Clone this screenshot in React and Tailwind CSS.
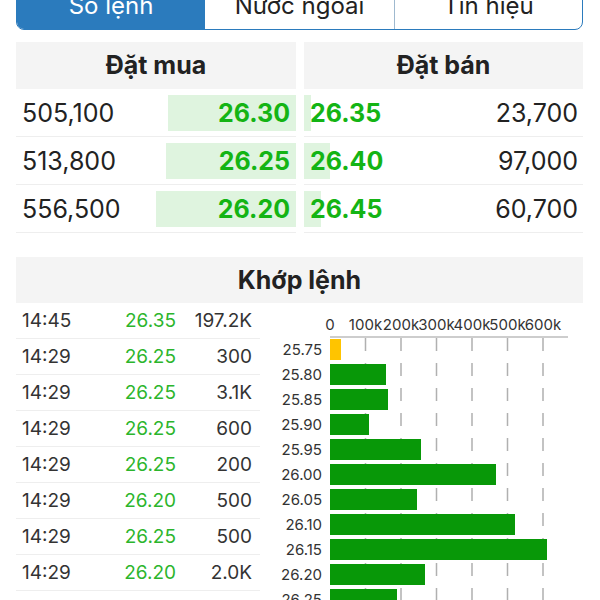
import React from "react";

const bids = [
  { q: "505,100", p: "26.30", w: 128 },
  { q: "513,800", p: "26.25", w: 130 },
  { q: "556,500", p: "26.20", w: 140 },
];
const asks = [
  { q: "23,700", p: "26.35", w: 7 },
  { q: "97,000", p: "26.40", w: 26 },
  { q: "60,700", p: "26.45", w: 17 },
];
const trades = [
  ["14:45", "26.35", "197.2K"],
  ["14:29", "26.25", "300"],
  ["14:29", "26.25", "3.1K"],
  ["14:29", "26.25", "600"],
  ["14:29", "26.25", "200"],
  ["14:29", "26.20", "500"],
  ["14:29", "26.25", "500"],
  ["14:29", "26.20", "2.0K"],
  ["14:29", "26.25", "1.0K"],
];
const bars = [
  ["25.75", 11, "#ffc400"],
  ["25.80", 56, "#089808"],
  ["25.85", 58, "#089808"],
  ["25.90", 39, "#089808"],
  ["25.95", 91, "#089808"],
  ["26.00", 166, "#089808"],
  ["26.05", 87, "#089808"],
  ["26.10", 185, "#089808"],
  ["26.15", 217, "#089808"],
  ["26.20", 95, "#089808"],
  ["26.25", 67, "#089808"],
  ["26.30", 40, "#089808"],
];
const ticks = ["0", "100k", "200k", "300k", "400k", "500k", "600k"];

function Chart() {
  return (
    <svg width="321" height="297" viewBox="262 303 321 297" className="block">
      {ticks.map((t, i) => (
        <text key={t} x={330 + i * 35.5} y={330} fontSize="15" fill="#333" textAnchor="middle" fontFamily="Inter, sans-serif">
          {t}
        </text>
      ))}
      {ticks.slice(1).map((t, i) => (
        <line key={t} x1={365.5 + i * 35.5} x2={365.5 + i * 35.5} y1={338} y2={600} stroke="#b0b0b0" strokeWidth="1.5" strokeDasharray="13 12" />
      ))}
      <line x1="330" x2="568" y1="337" y2="337" stroke="#bdbdbd" strokeWidth="1.5" />
      {bars.map(([label, w, c], i) => (
        <g key={label}>
          <text x="322" y={339 + i * 25 + 16} fontSize="15" fill="#333" textAnchor="end" fontFamily="Inter, sans-serif">
            {label}
          </text>
          <rect x="330" y={339 + i * 25} width={w} height="21" fill={c} />
        </g>
      ))}
    </svg>
  );
}

export default function App() {
  return (
    <div className="w-[600px] h-[600px] overflow-hidden bg-white font-['Inter',sans-serif] text-[#222]">
      <div className="ml-[16px] mr-[17px] mt-[-18px] h-[48px] flex border border-[#2b7bbd] rounded-b-[8px] overflow-hidden text-[24px]">
        <div className="w-[188px] bg-[#2b7bbd] text-white flex items-center justify-center">Sổ lệnh</div>
        <div className="w-[190px] border-r border-[#9fb9cf] flex items-center justify-center">Nước ngoài</div>
        <div className="flex-1 flex items-center justify-center">Tín hiệu</div>
      </div>

      <div className="mt-[12px] ml-[16px] mr-[17px] flex gap-[8px]">
        <div className="w-[280px]">
          <div className="h-[47px] bg-[#f4f4f4] flex items-center justify-center font-bold text-[25px]">Đặt mua</div>
          {bids.map((r) => (
            <div key={r.p} className="relative h-[48px] border-b border-[#eeeeee] flex items-center justify-between pl-[6px] pr-[6px] pt-[2px] text-[25px]">
              <div className="absolute right-0 top-[6px] bottom-[5px] bg-[#dff4df]" style={{ width: r.w }} />
              <span className="relative">{r.q}</span>
              <span className="relative font-bold text-[#14b414]">{r.p}</span>
            </div>
          ))}
        </div>
        <div className="flex-1">
          <div className="h-[47px] bg-[#f4f4f4] flex items-center justify-center font-bold text-[25px]">Đặt bán</div>
          {asks.map((r) => (
            <div key={r.p} className="relative h-[48px] border-b border-[#eeeeee] flex items-center justify-between pl-[6px] pr-[5px] pt-[2px] text-[25px]">
              <div className="absolute left-0 top-[6px] bottom-[5px] bg-[#dff4df]" style={{ width: r.w }} />
              <span className="relative font-bold text-[#14b414]">{r.p}</span>
              <span className="relative">{r.q}</span>
            </div>
          ))}
        </div>
      </div>

      <div className="mt-[24px] ml-[16px] mr-[17px]">
        <div className="h-[46px] bg-[#f4f4f4] flex items-center justify-center font-bold text-[25px] pt-[2px]">Khớp lệnh</div>
        <div className="flex">
          <div className="w-[244px] shrink-0">
            {trades.map((t, i) => (
              <div key={i} className="h-[36px] border-b border-[#eeeeee] flex items-center pl-[6px] pr-[8px] pt-[2px] text-[19px] text-[#333]">
                <span className="flex-1">{t[0]}</span>
                <span className="w-[66px] text-right text-[#2cb52c]">{t[1]}</span>
                <span className="w-[76px] text-right">{t[2]}</span>
              </div>
            ))}
          </div>
          <div className="ml-[2px] shrink-0">
            <Chart />
          </div>
        </div>
      </div>
    </div>
  );
}
